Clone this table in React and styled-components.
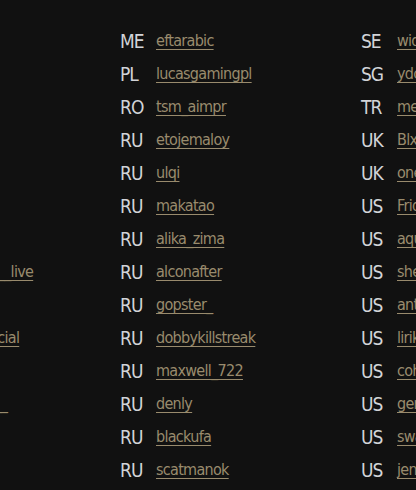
import React from "react";
import styled, { createGlobalStyle } from "styled-components";

const GlobalStyle = createGlobalStyle`
	html, body {
		margin: 0;
		padding: 0;
		background: #111111;
		overflow: hidden;
	}
`;

const Page = styled.div`
	width: 416px;
	height: 490px;
	overflow: hidden;
	background: #111111;
`;

const Columns = styled.div`
	display: grid;
	grid-template-columns: repeat(3, 241px);
	margin-left: -121px;
	padding-top: 24px;
`;

const List = styled.ul`
	list-style: none;
	margin: 0;
	padding: 0;
`;

const Row = styled.li`
	display: flex;
	align-items: center;
	height: 33px;
	white-space: nowrap;
`;

const Code = styled.span`
	width: 36px;
	flex: none;
	font-family: "DejaVu Sans Condensed", "DejaVu Sans", sans-serif;
	font-stretch: condensed;
	font-size: 19px;
	font-weight: 500;
	color: #d2d4d8;
	letter-spacing: -1px;
`;

const Channel = styled.a`
	font-family: "DejaVu Sans Condensed", "DejaVu Sans", sans-serif;
	font-stretch: condensed;
	font-size: 16px;
	color: #998b6d;
	letter-spacing: -0.7px;
	text-decoration: underline;
	text-underline-offset: 3px;
`;

const columns = [
	[
		["DE", "gronkh"],
		["DE", "papaplatte"],
		["DE", "rewinside"],
		["ES", "ibai"],
		["ES", "auronplay"],
		["FR", "zerator"],
		["FR", "locklear"],
		["IT", "kuplinovplay__live"],
		["JP", "kato_junichi"],
		["KR", "mazelov_official"],
		["KZ", "buster"],
		["ME", "wantedstrm__"],
		["ME", "limon"],
		["ME", "mrtv"],
	],
	[
		["ME", "eftarabic"],
		["PL", "lucasgamingpl"],
		["RO", "tsm_aimpr"],
		["RU", "etojemaloy"],
		["RU", "ulqi"],
		["RU", "makatao"],
		["RU", "alika_zima"],
		["RU", "alconafter"],
		["RU", "gopster_"],
		["RU", "dobbykillstreak"],
		["RU", "maxwell_722"],
		["RU", "denly"],
		["RU", "blackufa"],
		["RU", "scatmanok"],
	],
	[
		["SE", "widgetz"],
		["SG", "ydcb"],
		["TR", "mertabimula"],
		["UK", "Blxckr"],
		["UK", "oneshot"],
		["US", "Fridge"],
		["US", "aquafps"],
		["US", "sheefgg"],
		["US", "anthony_kongphan"],
		["US", "lirik"],
		["US", "cohhcarnage"],
		["US", "gernaderjake"],
		["US", "swagg"],
		["US", "jenfoxxuwu"],
	],
];

const App = () => {
	return (
		<Page>
			<GlobalStyle />
			<Columns>
				{columns.map((col, i) => (
					<List key={i}>
						{col.map(([code, name]) => (
							<Row key={name}>
								<Code>{code}</Code>
								<Channel href="#">{name}</Channel>
							</Row>
						))}
					</List>
				))}
			</Columns>
		</Page>
	);
};

export default App;
